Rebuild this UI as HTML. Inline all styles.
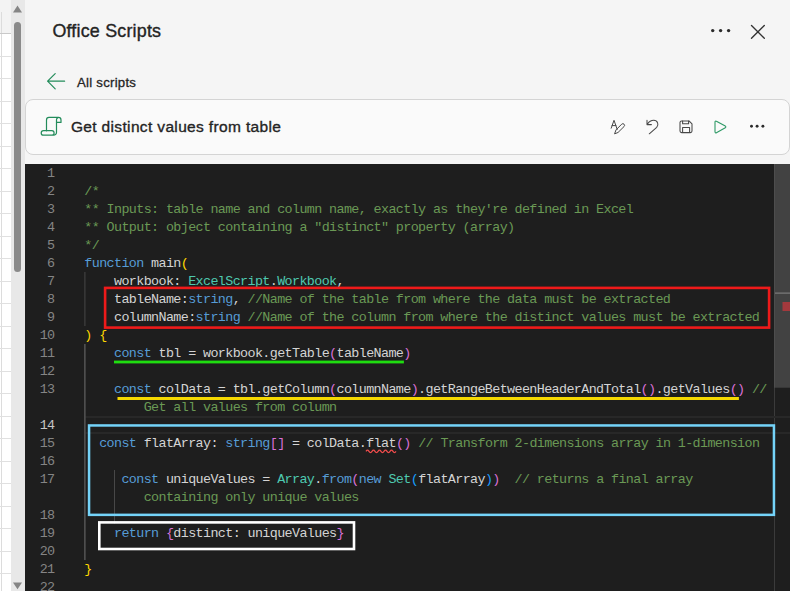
<!DOCTYPE html>
<html lang="en">
<head>
<meta charset="utf-8">
<title>Office Scripts</title>
<style>
html,body{margin:0;padding:0;}
body{width:790px;height:591px;overflow:hidden;position:relative;background:#f5f5f5;font-family:"Liberation Sans",sans-serif;color:#242424;}
.abs{position:absolute;}
#grid{left:0;top:0;width:11px;height:591px;background:#fff;}
#grid .hdr{left:0;top:0;width:11px;height:33px;background:#f3f3f3;}
#grid .v{left:1px;top:12px;width:1px;height:579px;background:#dcdcdc;}
#grid .h{left:0;width:11px;height:1px;background:#e0e0e0;}
#sb{left:11px;top:0;width:14px;height:591px;background:#e8e8e8;}
#sb .thumb{left:3px;top:22px;width:7px;height:250px;border-radius:3.5px;background:#8a8a8a;}
#panel{left:25px;top:0;width:765px;height:591px;background:#f5f5f5;}
#title{left:27.4px;top:19.4px;font-size:17.9px;letter-spacing:0.2px;line-height:24px;white-space:nowrap;color:#242424;-webkit-text-stroke:0.35px #242424;}
#back{left:52px;top:73.5px;font-size:13.2px;letter-spacing:0.25px;line-height:18px;white-space:nowrap;color:#242424;-webkit-text-stroke:0.3px #242424;}
#card{left:0;top:99px;width:764.5px;height:56px;box-sizing:border-box;border:1px solid #d4d4d4;border-radius:8px;background:#fafafa;}
#sname{left:45.9px;top:116.6px;font-size:15.5px;letter-spacing:0.35px;line-height:20px;white-space:nowrap;color:#242424;-webkit-text-stroke:0.35px #242424;}
#ed{left:0;top:164px;width:765px;height:427px;background:#1e1e1e;overflow:hidden;font-family:"Liberation Mono","DejaVu Sans Mono",monospace;font-size:13.4px;letter-spacing:-0.619px;color:#d4d4d4;}
.ln{left:0;width:29.5px;height:18px;line-height:18px;margin-top:1px;text-align:right;color:#858585;white-space:pre;}
.cl{left:59.3px;height:18px;line-height:18px;margin-top:1px;white-space:pre;}
.act{color:#c6c6c6}
.c{color:#6a9955}.k{color:#569cd6}.t{color:#4ec9b0}.y{color:#ffd700}.p{color:#da70d6}.b{color:#179fff}
</style>
</head>
<body>
<div id="grid" class="abs">
  <div class="hdr abs"></div>
  <div class="v abs"></div><div class="h abs" style="top:33px;background:#c9c9c9"></div><div class="h abs" style="top:56px"></div><div class="h abs" style="top:78px"></div><div class="h abs" style="top:101px"></div><div class="h abs" style="top:123px"></div><div class="h abs" style="top:146px"></div><div class="h abs" style="top:168px"></div><div class="h abs" style="top:191px"></div><div class="h abs" style="top:213px"></div><div class="h abs" style="top:236px"></div><div class="h abs" style="top:258px"></div><div class="h abs" style="top:281px"></div><div class="h abs" style="top:303px"></div><div class="h abs" style="top:326px"></div><div class="h abs" style="top:348px"></div><div class="h abs" style="top:371px"></div><div class="h abs" style="top:393px"></div><div class="h abs" style="top:416px"></div><div class="h abs" style="top:438px"></div><div class="h abs" style="top:461px"></div><div class="h abs" style="top:483px"></div><div class="h abs" style="top:506px"></div><div class="h abs" style="top:528px"></div><div class="h abs" style="top:551px"></div><div class="h abs" style="top:573px"></div>
</div>
<div id="sb" class="abs">
  <svg class="abs" style="left:0;top:0" width="14" height="591" viewBox="0 0 14 591"><path d="M2 12.6 L6.5 5.6 L11 12.6 Z" fill="#858585"/><path d="M2 582.4 L11 582.4 L6.5 589.2 Z" fill="#858585"/></svg>
  <div class="thumb abs"></div>
</div>
<div id="panel" class="abs">
  <div id="title" class="abs">Office Scripts</div>
  <div id="back" class="abs">All scripts</div>
  <div id="card" class="abs"></div>
  <div id="sname" class="abs">Get distinct values from table</div>

  <svg id="hicons" class="abs" style="left:0;top:0" width="765" height="160" viewBox="25 0 765 160" fill="none" stroke-linecap="round" stroke-linejoin="round">
    <!-- header more -->
    <g fill="#2b2b2b" stroke="none"><circle cx="712.7" cy="30.6" r="1.7"/><circle cx="720.6" cy="30.6" r="1.7"/><circle cx="728.6" cy="30.6" r="1.7"/></g>
    <!-- close -->
    <path d="M751.5 25.4 L764.3 38.2 M764.3 25.4 L751.5 38.2" stroke="#333" stroke-width="1.35"/>
    <!-- back arrow -->
    <path d="M47.6 81.2 H64.6 M55.2 73.6 L47.6 81.2 L55.2 88.8" stroke="#238c5b" stroke-width="1.2"/>
    <!-- script icon -->
    <g stroke="#238c5b" stroke-width="1.2" transform="translate(0,0.4)">
      <path d="M46.5 130.5 V119.5 a2.5 2.5 0 0 1 2.5 -2.5 H58.5 a2.5 2.5 0 0 1 2.5 2.5 V122 H56.5 V132 a2.8 2.8 0 0 1 -2.8 2.8 H43.5 a2.3 2.3 0 0 1 0 -4.6 H51.8 a2.3 2.3 0 0 1 0 4.6"/>
      <path d="M56.5 122 V119.5 a2.3 2.3 0 0 1 2.2 -2.4"/>
    </g>
    <!-- rename -->
    <g stroke="#484848" stroke-width="1">
      <path d="M611.2 128.2 L614 120.3 L617.2 129.4 M612.1 125.6 H615.9"/>
      <path d="M614.7 133.5 L616 129.9 L621.7 124.2 a1.65 1.65 0 0 1 2.35 2.35 L618.3 132.2 Z"/>
    </g>
    <!-- undo -->
    <path d="M647 120.2 V124.6 H651.4 M647.4 124.2 C649 121.6 651.5 120.3 653.8 120.3 a4.1 4.1 0 0 1 2.9 7 L649.3 133.8" stroke="#484848" stroke-width="1.05"/>
    <!-- save -->
    <g stroke="#484848" stroke-width="1.05">
      <path d="M680 122.5 a1.6 1.6 0 0 1 1.6 -1.6 H689 L692 123.9 V131 a1.6 1.6 0 0 1 -1.6 1.6 H681.6 a1.6 1.6 0 0 1 -1.6 -1.6 Z"/>
      <path d="M682.6 121 V123.8 H688.6 V121 M682.6 132.4 V127.4 H689.6 V132.4"/>
    </g>
    <!-- play -->
    <path d="M715 122 a0.9 0.9 0 0 1 1.4 -0.8 L725.3 126.1 a0.9 0.9 0 0 1 0 1.6 L716.4 132.7 a0.9 0.9 0 0 1 -1.4 -0.8 Z" stroke="#2e9a66" stroke-width="1.1"/>
    <!-- toolbar more -->
    <g fill="#2b2b2b" stroke="none"><circle cx="751.5" cy="126.2" r="1.45"/><circle cx="757.1" cy="126.2" r="1.45"/><circle cx="762.9" cy="126.2" r="1.45"/></g>
  </svg>
  <div id="ed" class="abs"><!--CODE-->
<div class="ln abs" style="top:0px">1</div>
<div class="ln abs" style="top:18px">2</div>
<div class="cl abs" style="top:18px"><span class="c">/*</span></div>
<div class="ln abs" style="top:36px">3</div>
<div class="cl abs" style="top:36px"><span class="c">** Inputs: table name and column name, exactly as they're defined in Excel</span></div>
<div class="ln abs" style="top:54px">4</div>
<div class="cl abs" style="top:54px"><span class="c">** Output: object containing a "distinct" property (array)</span></div>
<div class="ln abs" style="top:72px">5</div>
<div class="cl abs" style="top:72px"><span class="c">*/</span></div>
<div class="ln abs" style="top:90px">6</div>
<div class="cl abs" style="top:90px"><span class="k">function</span> main<span class="y">(</span></div>
<div class="ln abs" style="top:108px">7</div>
<div class="cl abs" style="top:108px">    workbook: <span class="t">ExcelScript</span>.<span class="t">Workbook</span>,</div>
<div class="ln abs" style="top:126px">8</div>
<div class="cl abs" style="top:126px">    tableName:<span class="k">string</span>, <span class="c">//Name of the table from where the data must be extracted</span></div>
<div class="ln abs" style="top:144px">9</div>
<div class="cl abs" style="top:144px">    columnName:<span class="k">string</span> <span class="c">//Name of the column from where the distinct values must be extracted</span></div>
<div class="ln abs" style="top:162px">10</div>
<div class="cl abs" style="top:162px"><span class="y">)</span> <span class="y">{</span></div>
<div class="ln abs" style="top:180px">11</div>
<div class="cl abs" style="top:180px">    <span class="k">const</span> tbl = workbook.getTable<span class="p">(</span>tableName<span class="p">)</span></div>
<div class="ln abs" style="top:198px">12</div>
<div class="ln abs" style="top:216px">13</div>
<div class="cl abs" style="top:216px">    <span class="k">const</span> colData = tbl.getColumn<span class="p">(</span>columnName<span class="p">)</span>.getRangeBetweenHeaderAndTotal<span class="p">()</span>.getValues<span class="p">()</span> <span class="c">//</span></div>
<div class="cl abs" style="top:234px">        <span class="c">Get all values from column</span></div>
<div class="ln abs act" style="top:252px">14</div>
<div class="ln abs" style="top:270px">15</div>
<div class="cl abs" style="top:270px">  <span class="k">const</span> flatArray: <span class="k">string</span><span class="p">[]</span> = colData.<span class="sq">flat</span><span class="p">()</span> <span class="c">// Transform 2-dimensions array in 1-dimension</span></div>
<div class="ln abs" style="top:288px">16</div>
<div class="ln abs" style="top:306px">17</div>
<div class="cl abs" style="top:306px">     <span class="k">const</span> uniqueValues = <span class="t">Array</span>.<span class="k">from</span><span class="p">(</span><span class="k">new</span> <span class="t">Set</span><span class="b">(</span>flatArray<span class="b">)</span><span class="p">)</span>  <span class="c">// returns a final array</span></div>
<div class="cl abs" style="top:324px">        <span class="c">containing only unique values</span></div>
<div class="ln abs" style="top:342px">18</div>
<div class="ln abs" style="top:360px">19</div>
<div class="cl abs" style="top:360px">    <span class="k">return</span> <span class="p">{</span>distinct: uniqueValues<span class="p">}</span></div>
<div class="ln abs" style="top:378px">20</div>
<div class="ln abs" style="top:396px">21</div>
<div class="cl abs" style="top:396px"><span class="y">}</span></div>
<div class="ln abs" style="top:414px">22</div>
<!--/CODE-->
<svg id="ov" class="abs" style="left:0;top:0" width="765" height="427" viewBox="0 0 765 427"><rect x="749.20" y="0.00" width="15.80" height="223.70" fill="#424242"/><rect x="749.00" y="0.00" width="1.00" height="427.00" fill="#3b3b3b"/><rect x="749.00" y="0.00" width="1.00" height="223.70" fill="#4d4d4d"/><rect x="750.00" y="128.30" width="15.00" height="1.70" fill="#6b6b6b"/><rect x="757.50" y="138.00" width="7.50" height="9.00" fill="#a3393d"/><rect x="60.50" y="252.00" width="704.50" height="2.00" fill="#282828"/><rect x="60.50" y="268.00" width="704.50" height="2.00" fill="#282828"/><rect x="59.40" y="108.00" width="1.00" height="54.00" fill="#484848"/><rect x="59.40" y="180.00" width="1.00" height="216.00" fill="#707070"/><rect x="89.00" y="306.00" width="1.00" height="53.70" fill="#484848"/><rect x="89.00" y="196.60" width="289.90" height="2.80" fill="#1fdd10"/><rect x="92.50" y="233.00" width="621.40" height="3.00" fill="#f5d800"/><rect x="80.10" y="123.90" width="664.00" height="39.70" fill="none" stroke="#ee1a1a" stroke-width="2.6"/><rect x="64.05" y="261.45" width="684.90" height="89.40" fill="none" stroke="#74d3f9" stroke-width="2.5"/><rect x="74.30" y="358.40" width="254.70" height="26.60" fill="none" stroke="#ffffff" stroke-width="2.6"/><path d="M341.0 287.4 q1.5 -2.4 3 0 q1.5 2.4 3 0 q1.5 -2.4 3 0 q1.5 2.4 3 0 q1.5 -2.4 3 0 q1.5 2.4 3 0 q1.5 -2.4 3 0 q1.5 2.4 3 0 q1.5 -2.4 3 0 q1.5 2.4 3 0" fill="none" stroke="#f14c4c" stroke-width="1.25"/></svg>
</div>
</div>
</body>
</html>
